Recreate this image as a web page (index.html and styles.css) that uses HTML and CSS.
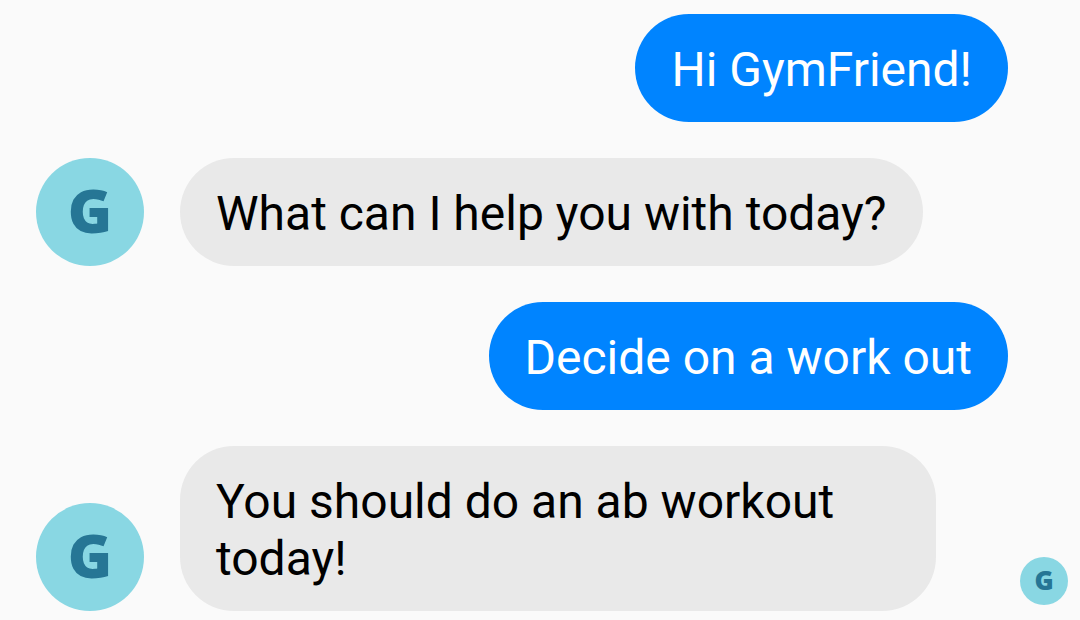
FILE: index.html
```html
<!DOCTYPE html>
<html lang="en">
<head>
<meta charset="utf-8">
<title>GymFriend chat</title>
<link rel="stylesheet" href="styles.css">
</head>
<body>
<main class="chat">
  <div class="row sent"><p class="bubble">Hi GymFriend!</p></div>
  <div class="row"><span class="avatar">G</span><p class="bubble">What can I help you with today?</p></div>
  <div class="row sent"><p class="bubble">Decide on a work out</p></div>
  <div class="row"><span class="avatar">G</span><p class="bubble">You should do an ab workout today!</p><span class="avatar seen">G</span></div>
</main>
</body>
</html>
```

FILE: styles.css
```css
* { box-sizing: border-box; }
body {
  margin: 0;
  background: #fafafa;
  color: #000;
  font-family: Roboto, "Liberation Sans", sans-serif;
}
.chat {
  display: flex;
  flex-direction: column;
  gap: 36px;
  padding: 14px 12px 9px 36px;
}
.row {
  display: flex;
  align-items: flex-end;
  gap: 36px;
}
.sent {
  justify-content: flex-end;
  padding-right: 60px;
}
.bubble {
  margin: 0;
  max-width: 756px;
  padding: 27px 36px 24px;
  border-radius: 54px;
  background: #e9e9e9;
  font-size: 48px;
  line-height: 57px;
}
.sent .bubble {
  background: #0084ff;
  color: #fff;
}
.avatar {
  display: flex;
  flex: none;
  align-items: center;
  justify-content: center;
  width: 108px;
  height: 108px;
  padding-bottom: 4px;
  border-radius: 50%;
  background: #89d7e3;
  color: #267695;
  font-family: "Open Sans", "Noto Sans", sans-serif;
  font-size: 60px;
  font-weight: 800;
  line-height: 1;
}
.seen {
  width: 48px;
  height: 48px;
  margin: 0 0 6px auto;
  padding-bottom: 2px;
  font-size: 26px;
}
```
